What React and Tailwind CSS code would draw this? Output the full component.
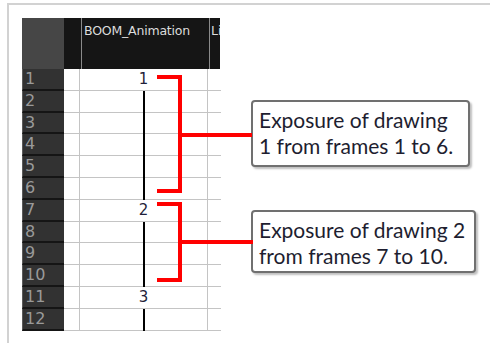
import React from "react";

const rows = [
  { n: 1, label: "1" },
  { n: 2, line: true },
  { n: 3, line: true },
  { n: 4, line: true },
  { n: 5, line: true },
  { n: 6, line: true },
  { n: 7, label: "2" },
  { n: 8, line: true },
  { n: 9, line: true },
  { n: 10, line: true },
  { n: 11, label: "3" },
  { n: 12, line: true },
];

const XSheet = () => (
  <div className="w-[199px] shrink-0" style={{ fontFamily: "'DejaVu Sans', 'Liberation Sans', sans-serif" }}>
    {/* Header */}
    <div className="flex h-[51px]">
      <div className="w-[42px] bg-[#464646]" />
      <div className="w-[18px] bg-[#151515] border-r border-[#8a8a8a]" />
      <div className="w-[128px] bg-[#151515] border-r border-[#8a8a8a] pl-[2px] pt-[5px] text-[12.5px] leading-[16px] text-[#dcdcdc] tracking-[-0.2px]">
        BOOM_Animation
      </div>
      <div className="w-[10px] overflow-hidden bg-[#151515] pl-[1px] pt-[5px] text-[12.5px] leading-[16px] text-[#dcdcdc]">
        Li
      </div>
    </div>
    {/* Rows */}
    {rows.map((r) => (
      <div key={r.n} className="flex h-[21.8px]">
        <div className="w-[42px] bg-[#323232] border-l border-[#5a5a5a] border-b-2 border-b-[#151515] pl-[2px] text-[16px] leading-[20px] text-[#9a9a9a]">
          {r.n}
        </div>
        <div className="w-[16px] border-b border-r border-[#c4c4c4]" />
        <div className="w-[128px] border-b border-r border-[#c4c4c4] flex justify-center">
          {r.label ? (
            <span className="text-[15px] leading-[20px] text-[#1f1f3a]">{r.label}</span>
          ) : (
            <div className="w-[2px] h-[calc(100%+1px)] bg-black" />
          )}
        </div>
        <div className="w-[13px] border-b border-[#c4c4c4]" />
      </div>
    ))}
  </div>
);

const Callout = ({ lines, className }) => (
  <div
    className={`rounded-[4px] border-2 border-[#707070] bg-white pl-[6px] pt-[5px] text-[21px] leading-[26px] text-[#1e1e30] shadow-[2px_2px_2px_rgba(0,0,0,0.25)] ${className}`}
    style={{ fontFamily: "Lato, 'Noto Sans', sans-serif" }}
  >
    {lines.map((l) => (
      <div key={l} className="whitespace-nowrap">{l}</div>
    ))}
  </div>
);

export default function App() {
  return (
    <div className="relative w-[490px] h-[343px] bg-white overflow-hidden">
      <div className="ml-[7px] mt-[3px] h-[340px] border-l-2 border-t-2 border-[#d2d2d2] pl-[13px] pt-[13px] flex">
        <XSheet />
        <div className="ml-[30px] pt-[82px] flex flex-col">
          <Callout className="w-[219px] h-[67px]" lines={["Exposure of drawing", "1 from frames 1 to 6."]} />
          <Callout className="mt-[43px] w-[225px] h-[63px] pt-[3px]" lines={["Exposure of drawing 2", "from frames 7 to 10."]} />
        </div>
      </div>

      {/* Red brackets */}
      <svg className="absolute left-0 top-0 pointer-events-none" width="490" height="343">
        <g fill="none" stroke="#ff0000" strokeWidth="4">
          <path d="M157 77 H180 V191 H157" />
          <path d="M180 135 H252" />
          <path d="M157 204 H180 V280 H157" />
          <path d="M180 242 H253" />
        </g>
      </svg>
    </div>
  );
}
